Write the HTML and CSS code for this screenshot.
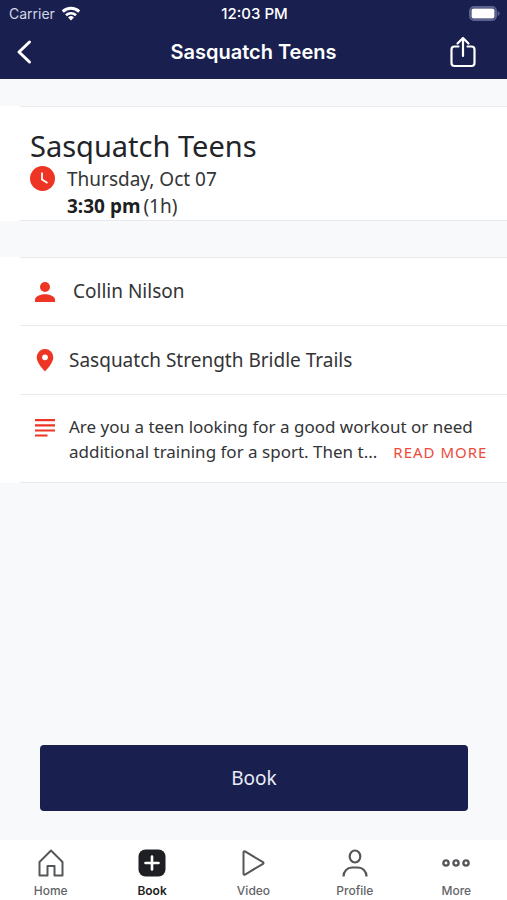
FILE: index.html
```html
<!DOCTYPE html>
<html lang="en">
<head>
<meta charset="utf-8">
<meta name="viewport" content="width=device-width, initial-scale=1">
<title>Sasquatch Teens</title>
<link rel="stylesheet" href="styles.css">
</head>
<body>
<div class="screen">
  <header class="top">
    <div class="status">
      <div class="status-left">
        <span class="carrier">Carrier</span>
        <svg width="20" height="15" viewBox="0 0 20 15" fill="none" stroke="#fff" stroke-width="3" aria-hidden="true">
          <path d="M1.8 5.6a11.8 11.8 0 0 1 16.4 0" />
          <path d="M5 9.2a7.2 7.2 0 0 1 10 0" stroke-width="2.6" />
          <path d="M10 14.4l-2.9-3a4.2 4.2 0 0 1 5.8 0z" fill="#fff" stroke="none" />
        </svg>
      </div>
      <span class="clock">12:03 PM</span>
      <svg class="battery" width="31" height="15" viewBox="0 0 31 15" aria-hidden="true">
        <rect x="1" y="1" width="26" height="13" rx="4" fill="none" stroke="#5d618d" stroke-width="2" />
        <rect x="2.500" y="2.500" width="23" height="10" rx="2" fill="#fff" />
        <path d="M28.6 5v5c1.400-.4 2-1.400 2-2.500s-.6-2.100-2-2.500z" fill="#5d618d" />
      </svg>
    </div>
    <div class="nav">
      <button class="icon-button" type="button" aria-label="Back">
        <svg width="16" height="26" viewBox="0 0 16 26" fill="none" stroke="#fff" stroke-width="3" stroke-linecap="round" stroke-linejoin="round"><path d="M13.500 3L3 13l10.500 10" /></svg>
      </button>
      <h1 class="nav-title">Sasquatch Teens</h1>
      <button class="icon-button share" type="button" aria-label="Share">
        <svg width="26" height="32" viewBox="0 0 26 32" fill="none" stroke="#fff" stroke-width="2.200" stroke-linecap="round" stroke-linejoin="round"><path d="M8.500 10.500H4.500a3 3 0 0 0-3 3V27a3 3 0 0 0 3 3h17a3 3 0 0 0 3-3V13.500a3 3 0 0 0-3-3h-4M13 20V2.500M7.500 7.500L13 2l5.500 5.500" /></svg>
      </button>
    </div>
  </header>

  <main class="content">
    <section class="card summary">
      <div class="inset summary-body">
        <h2 class="title">Sasquatch Teens</h2>
        <div class="when">
          <svg width="25" height="25" viewBox="0 0 25 25" aria-hidden="true"><circle cx="12.500" cy="12.500" r="12.500" fill="#ee3524" /><path d="M12 6.500v7l5.500 3.400" fill="none" stroke="#fff" stroke-width="1.800" /></svg>
          <div class="when-text">
            <div>Thursday, Oct 07</div>
            <div class="time"><strong>3:30 pm</strong><span>(1h)</span></div>
          </div>
        </div>
      </div>
    </section>

    <section class="card details">
      <div class="inset row person">
        <svg class="row-icon" width="20" height="20" viewBox="0 0 20 20" fill="#ee3524" aria-hidden="true"><circle cx="10" cy="5" r="5" /><path d="M0 20v-2.500C0 14 6.500 12.200 10 12.200s10 1.800 10 5.300V20z" /></svg>
        <span>Collin Nilson</span>
      </div>
      <div class="inset row">
        <svg class="row-icon" width="20" height="24" viewBox="0 0 20 24" fill="#ee3524" aria-hidden="true"><path fill-rule="evenodd" d="M10 1a8.300 8.300 0 0 0-8.300 8.300C1.700 15.500 10 23.500 10 23.500s8.300-8 8.300-14.200A8.300 8.300 0 0 0 10 1zm0 5.400a2.900 2.900 0 1 1 0 5.800 2.900 2.900 0 0 1 0-5.800z" /></svg>
        <span>Sasquatch Strength Bridle Trails</span>
      </div>
      <div class="inset row about">
        <svg class="row-icon" width="20" height="18" viewBox="0 0 20 18" fill="#ee3524" aria-hidden="true"><path d="M0 0h20v2.200H0zM0 5.200h20v2.200H0zM0 10.400h20v2.200H0zM0 15.400h12.500v2.200H0z" /></svg>
        <p class="about-text">Are you a teen looking for a good workout or need additional training for a sport. Then t...<button class="read-more" type="button">READ MORE</button></p>
      </div>
    </section>

    <button class="book" type="button">Book</button>
  </main>

  <nav class="tabs">
    <a class="tab" href="#home">
      <svg width="28" height="28" viewBox="0 0 28 28" fill="none" stroke="#55565a" stroke-width="2" stroke-linejoin="round" aria-hidden="true"><path d="M2.500 26.500V13L14 1.500 25.500 13v13.500h-8V17h-7v9.500z" /></svg>
      <span>Home</span>
    </a>
    <a class="tab active" href="#book" aria-current="page">
      <svg width="28" height="28" viewBox="0 0 28 28" aria-hidden="true"><rect x=".5" y=".5" width="27" height="27" rx="7" fill="#1e1f22" /><path d="M14 7.500v13M7.500 14h13" stroke="#fff" stroke-width="2.600" stroke-linecap="round" /></svg>
      <span>Book</span>
    </a>
    <a class="tab" href="#video">
      <svg width="28" height="28" viewBox="0 0 28 28" fill="none" stroke="#55565a" stroke-width="2" stroke-linejoin="round" aria-hidden="true"><path d="M4.500 3.200v21.600c0 .9.800 1.200 1.500.8l18-10.800c.7-.4.7-1.200 0-1.600L6 2.400c-.7-.4-1.500-.1-1.500.8z" /></svg>
      <span>Video</span>
    </a>
    <a class="tab" href="#profile">
      <svg width="28" height="28" viewBox="0 0 28 28" fill="none" stroke="#55565a" stroke-width="2.200" aria-hidden="true"><ellipse cx="14" cy="7.500" rx="5.300" ry="6" /><path d="M2.500 27.500c0-5.500 4-9 8.500-9h6c4.500 0 8.500 3.500 8.500 9" /></svg>
      <span>Profile</span>
    </a>
    <a class="tab" href="#more">
      <svg width="28" height="28" viewBox="0 0 28 28" fill="none" stroke="#55565a" stroke-width="2.400" aria-hidden="true"><circle cx="4" cy="14" r="2.600" /><circle cx="14" cy="14" r="2.600" /><circle cx="24" cy="14" r="2.600" /></svg>
      <span>More</span>
    </a>
  </nav>
</div>
</body>
</html>
```

FILE: styles.css
```css
* {
  box-sizing: border-box;
}

body {
  margin: 0;
  background: #f7f9fb;
  color: #333436;
  font-family: "Noto Sans", "Open Sans", sans-serif;
  font-size: 19px;
  line-height: 27px;
}

h1, h2, p {
  margin: 0;
  font-weight: 400;
}

button {
  padding: 0;
  border: 0;
  background: none;
  color: inherit;
  font: inherit;
  cursor: pointer;
}

svg {
  display: block;
  flex: none;
}

.screen {
  display: flex;
  flex-direction: column;
  min-height: 100vh;
}

.top {
  padding-bottom: 2px;
  background: #19204f;
  color: #fff;
  font-family: Inter, "Liberation Sans", sans-serif;
}

.status,
.nav {
  display: grid;
  grid-template-columns: 1fr auto 1fr;
  align-items: center;
}

.status {
  height: 27px;
  padding: 0 7px 0 9px;
  font-size: 14px;
}

.status-left {
  display: flex;
  align-items: center;
  gap: 6px;
}

.carrier {
  color: #d3d6e6;
}

.clock {
  font-size: 15px;
  font-weight: 500;
}

.battery {
  justify-self: end;
}

.nav {
  height: 50px;
  padding: 0 31px 0 16px;
}

.nav-title {
  padding-left: 15px;
  font-size: 20px;
  font-weight: 600;
}

.icon-button {
  justify-self: start;
}

.share {
  justify-self: end;
}

.content {
  flex: 1;
  display: flex;
  flex-direction: column;
}

.card {
  background: #fff;
}

.inset {
  margin-left: 20px;
  border-top: 1px solid #e8eaed;
}

.summary {
  margin-top: 27px;
}

.summary-body {
  padding: 19px 20px 0 10px;
  border-bottom: 1px solid #e8eaed;
}

.title {
  color: #232427;
  font-size: 29px;
  line-height: 40px;
}

.when {
  display: flex;
  gap: 12px;
}

.time {
  display: flex;
  gap: 3px;
}

.time strong {
  color: #1e1f22;
}

.details {
  margin-top: 36px;
}

.row {
  display: flex;
  align-items: center;
  gap: 14px;
  min-height: 69px;
  padding: 0 16px 0 15px;
}

.person {
  gap: 18px;
  min-height: 68px;
}

.about {
  align-items: flex-start;
  padding-top: 19px;
  padding-bottom: 18px;
  border-bottom: 1px solid #e8eaed;
}

.about .row-icon {
  margin-top: 5px;
}

.about-text {
  flex: 1;
  font-size: 17px;
  line-height: 25px;
}

.read-more {
  margin-left: 16px;
  color: #ee4a3c;
  font-size: 15px;
  line-height: 20px;
  letter-spacing: 1px;
}

.book {
  height: 66px;
  margin: auto 39px 29px 40px;
  border-radius: 4px;
  background: #19204f;
  color: #e9ecf8;
}

.tabs {
  display: grid;
  grid-template-columns: repeat(5, 1fr);
  height: 60px;
  background: #fff;
}

.tab {
  display: flex;
  flex-direction: column;
  align-items: center;
  gap: 6px;
  padding-top: 9px;
  color: #636468;
  font-family: Inter, "Liberation Sans", sans-serif;
  font-size: 12px;
  font-weight: 500;
  line-height: 16px;
  text-decoration: none;
}

.active {
  color: #1e1f22;
  font-weight: 600;
}
```
